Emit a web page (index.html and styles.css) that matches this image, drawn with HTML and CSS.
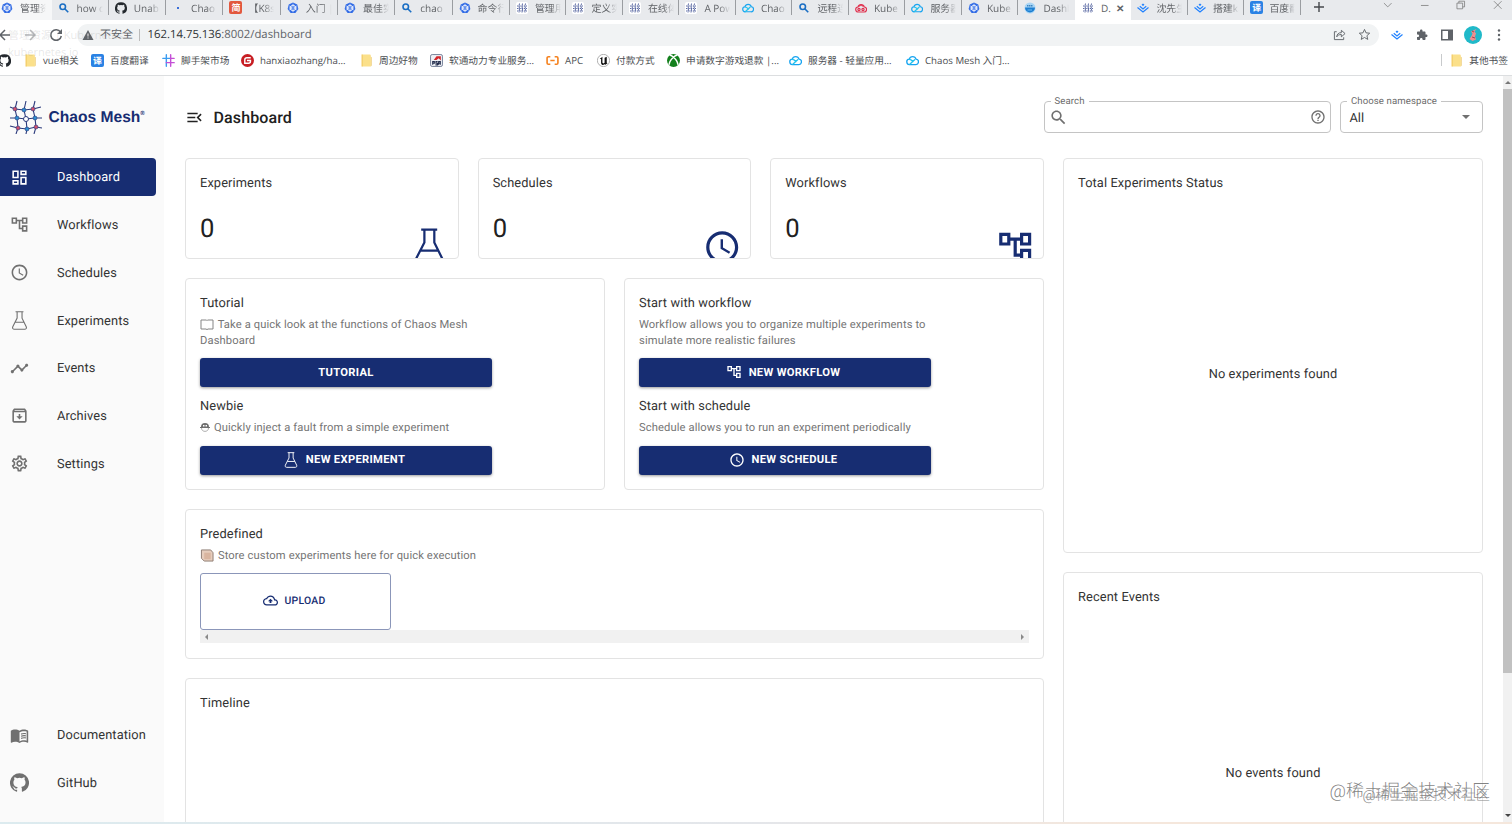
FILE: index.html
```
<!DOCTYPE html>
<html lang="zh-CN">
<head>
    <meta charset="UTF-8">
    <meta name="viewport" content="width=device-width, initial-scale=1.0">
    <title>Dashboard | Chaos Mesh</title>
    <link rel="stylesheet" href="styles.css">
</head>
<body>
    <!-- icons -->
    <svg class="sprite" xmlns="http://www.w3.org/2000/svg">
        <symbol id="i-k8s" viewBox="0 0 24 24"><path fill="#326ce5" d="M12 1l8.500 4 2.200 9.200-6 7.800H7.300l-6-7.800L3.500 5z"/><circle cx="12" cy="12" r="5.500" fill="none" stroke="#fff" stroke-width="1.600"/><path stroke="#fff" stroke-width="1.400" d="M12 3.500v17M4.500 8l15 8M19.500 8l-15 8M3.800 12h16.400"/><circle cx="12" cy="12" r="1.800" fill="#326ce5"/></symbol>
        <symbol id="i-search" viewBox="0 0 24 24"><path fill="currentColor" d="M15.500 14h-.79l-.28-.27C15.410 12.590 16 11.110 16 9.500 16 5.910 13.090 3 9.500 3S3 5.910 3 9.500 5.910 16 9.500 16c1.610 0 3.090-.59 4.230-1.570l.27.28v.79l5 4.990L20.490 19l-4.990-5zm-6 0C7.010 14 5 11.990 5 9.500S7.010 5 9.500 5 14 7.010 14 9.500 11.990 14 9.500 14z"/></symbol>
        <symbol id="i-find" viewBox="0 0 24 24"><g fill="none" stroke="#1b6fc4" stroke-width="3.200"><circle cx="9.500" cy="9.500" r="5.500"/><path d="M13.500 13.500l7 7"/></g></symbol>
        <symbol id="i-github" viewBox="0 0 24 24"><path fill="currentColor" d="M12 .3a12 12 0 0 0-3.800 23.400c.6.1.8-.3.8-.6v-2c-3.300.7-4-1.600-4-1.600-.6-1.400-1.400-1.800-1.400-1.800-1-.7.1-.7.1-.7 1.200 0 1.900 1.200 1.900 1.200 1 1.800 2.800 1.300 3.500 1 0-.8.4-1.300.7-1.600-2.700-.3-5.500-1.300-5.500-6 0-1.200.5-2.300 1.300-3.100-.2-.4-.6-1.600 0-3.200 0 0 1-.3 3.400 1.200a11.500 11.500 0 0 1 6 0c2.300-1.500 3.300-1.200 3.300-1.200.6 1.600.2 2.800 0 3.200.9.8 1.300 1.900 1.300 3.200 0 4.600-2.800 5.600-5.500 5.900.5.4.9 1 .9 2.200v3.300c0 .3.1.7.8.6A12 12 0 0 0 12 .3"/></symbol>
        <symbol id="i-mesh" viewBox="0 0 24 24"><rect width="24" height="24" rx="4" fill="#fff"/><g fill="none" stroke="#4a5a9a" stroke-width="1.800"><path stroke-dasharray="4 1.500" d="M7 3l-1 5 1 5-1 8M13 3l-1 6 1 5-1 7M19 3l-1 5 1 6-1 7"/><path stroke-dasharray="3 1.500" d="M2 8h20M2 13h20M2 18h20"/></g></symbol>
        <symbol id="i-cloud" viewBox="0 0 24 24"><g fill="none" stroke-width="2.400" stroke-linecap="round"><path stroke="#18a4f0" d="M7 19.500a5 5 0 0 1-1-10 6.500 6.500 0 0 1 12.500 0 5 5 0 0 1-1 10z"/><path stroke="#22c3ee" d="M7 19l9-8.500M6 10c3 0 5 2 7 4"/></g></symbol>
        <symbol id="i-redcloud" viewBox="0 0 24 24"><g fill="none" stroke="#e0304e" stroke-width="2.400"><path d="M7 20a5 5 0 0 1-1-10 6.500 6.500 0 0 1 12.500 0 5 5 0 0 1-1 10z"/><circle cx="8" cy="15" r="2.200"/><circle cx="16" cy="15" r="2.200"/><path d="M9 9a3 3 0 0 1 6 0"/></g></symbol>
        <symbol id="i-whale" viewBox="0 0 24 24"><circle cx="12" cy="12" r="11" fill="#a9d5f5"/><path fill="#1d7fd1" d="M2 11h20a10 10 0 0 1-20 0z"/><path fill="#3d85c0" d="M6 6h3v3H6zm4 0h3v3h-3zm4 0h3v3h-3z"/><path fill="#6fb8ee" d="M7 15h9v2H7z"/></symbol>
        <symbol id="i-juejin" viewBox="0 0 24 24"><g fill="none" stroke="#1e80ff" stroke-width="2.300"><path d="M1 11l11 9 11-9M5.500 8.500L12 13.800l6.500-5.300"/></g><path fill="#1e80ff" d="M12 3l3 2.300L12 8 9 5.300z"/></symbol>
        <symbol id="i-folder" viewBox="0 0 24 24"><path fill="#fbe08a" d="M3 1h15a2 2 0 0 1 2 2v20H3z"/><path fill="#e9bd4c" d="M20 5l2 1v15l-2 2zM3 1h2v22H3z" opacity=".6"/></symbol>
        <symbol id="i-hash" viewBox="0 0 24 24"><g fill="none" stroke-width="2.600" stroke-linecap="round"><path stroke="#3a9cf0" d="M8 1.500v21M1.500 8h14"/><path stroke="#c44fd6" d="M16 1.500v21M8 16h14.500M17 8h5.500"/></g></symbol>
        <symbol id="i-gitee" viewBox="0 0 24 24"><circle cx="12" cy="12" r="12" fill="#c71d23"/><path fill="none" stroke="#fff" stroke-width="2.600" d="M18 7h-7a4 4 0 0 0-4 4v6h7a3.500 3.500 0 0 0 3.500-3.500V12H11"/></symbol>
        <symbol id="i-psa" viewBox="0 0 24 24"><rect x="1" y="1" width="22" height="22" rx="3" fill="#eef0f5" stroke="#5f6b88" stroke-width="1.500"/><path fill="#d4262b" d="M7 11l5-7 8 0v8l-4-4-4 3z"/><path fill="none" stroke="#222c4c" stroke-width="2" d="M5 20v-6h3v3H5M14 14h-3v3h3v3h-4M16 20v-6h3v6M16 17h3"/></symbol>
        <symbol id="i-apc" viewBox="0 0 24 24"><path fill="none" stroke="#f5821f" stroke-width="3" d="M8 5H4.500A2.500 2.500 0 0 0 2 7.500v9A2.500 2.500 0 0 0 4.500 19H8M16 5h3.500A2.500 2.500 0 0 1 22 7.500v9a2.500 2.500 0 0 1-2.500 2.500H16M8 12h8"/></symbol>
        <symbol id="i-unreal" viewBox="0 0 24 24"><circle cx="12" cy="12" r="11.300" fill="#fff" stroke="#888" stroke-width="1.200"/><path fill="#111" d="M5 9l5-4v11l2 1.500 2-1.500V7l4-2v11l1.500 1-4 3-2-1-2 1.500c-2 0-4-2-4-4V9z"/></symbol>
        <symbol id="i-xbox" viewBox="0 0 24 24"><circle cx="12" cy="12" r="12" fill="#13801c"/><path fill="none" stroke="#fff" stroke-width="2.800" d="M5 2.500c3-.5 5 1.500 7 3.500 2-2 4-4 7-3.500M12 6c-4 3.500-8 8-8 14M12 6c4 3.500 8 8 8 14"/></symbol>
        <symbol id="i-dashboard" viewBox="0 0 24 24"><path fill="currentColor" d="M19 5v2h-4V5h4M9 5v6H5V5h4m10 8v6h-4v-6h4M9 17v2H5v-2h4M21 3h-8v6h8V3zM11 3H3v10h8V3zm10 8h-8v10h8V11zm-10 4H3v6h8v-6z"/></symbol>
        <symbol id="i-tree" viewBox="0 0 24 24"><path fill="currentColor" d="M22 11V3h-7v3H9V3H2v8h7V8h2v10h4v3h7v-8h-7v3h-2V8h2v3h7zM7 9H4V5h3v4zm10 6h3v4h-3v-4zm0-10h3v4h-3V5z"/></symbol>
        <symbol id="i-clock" viewBox="0 0 24 24"><path fill="currentColor" d="M11.990 2C6.470 2 2 6.480 2 12s4.470 10 9.990 10C17.520 22 22 17.520 22 12S17.520 2 11.990 2zM12 20c-4.420 0-8-3.580-8-8s3.580-8 8-8 8 3.580 8 8-3.580 8-8 8zm.5-13H11v6l5.250 3.150.75-1.230-4.500-2.670z"/></symbol>
        <symbol id="i-flask" viewBox="0 0 24 24"><path fill="none" stroke="currentColor" stroke-width="1.400" d="M7 1h10M9 1v8L3.500 19.800c-.8 1.700.2 3.200 2 3.200h13c1.800 0 2.800-1.500 2-3.200L15.200 9V1M6.500 14.200h11.200"/></symbol>
        <symbol id="i-events" viewBox="0 0 24 24"><path fill="currentColor" d="M23 8c0 1.100-.9 2-2 2-.18 0-.35-.02-.51-.07l-3.560 3.550c.05.16.07.34.07.52 0 1.100-.9 2-2 2s-2-.9-2-2c0-.18.02-.36.07-.52l-2.550-2.550c-.16.05-.34.07-.52.07s-.36-.02-.52-.07l-4.550 4.560c.05.16.07.33.07.51 0 1.100-.9 2-2 2s-2-.9-2-2 .9-2 2-2c.18 0 .35.02.51.07l4.560-4.550C8.020 9.360 8 9.180 8 9c0-1.100.9-2 2-2s2 .9 2 2c0 .18-.02.36-.07.52l2.550 2.550c.16-.05.34-.07.52-.07s.36.02.52.07l3.550-3.560C19.020 8.350 19 8.180 19 8c0-1.100.9-2 2-2s2 .9 2 2z"/></symbol>
        <symbol id="i-archive" viewBox="0 0 24 24"><path fill="currentColor" d="M20.540 5.230l-1.390-1.680C18.880 3.210 18.470 3 18 3H6c-.47 0-.88.21-1.160.55L3.460 5.230C3.170 5.570 3 6.020 3 6.500V19c0 1.100.9 2 2 2h14c1.100 0 2-.9 2-2V6.500c0-.48-.17-.93-.46-1.270zM6.240 5h11.520l.83 1H5.420l.82-1zM5 19V8h14v11H5zm8-9h-2v3H8l4 4 4-4h-3z"/></symbol>
        <symbol id="i-settings" viewBox="0 0 24 24"><path fill="currentColor" d="M19.430 12.980c.04-.32.07-.64.07-.98s-.03-.66-.07-.98l2.110-1.650c.19-.15.24-.42.12-.64l-2-3.460c-.09-.16-.26-.25-.44-.25-.06 0-.12.01-.17.03l-2.490 1c-.52-.4-1.080-.73-1.690-.98l-.38-2.650C14.460 2.180 14.250 2 14 2h-4c-.25 0-.46.18-.49.42l-.38 2.650c-.61.25-1.170.59-1.690.98l-2.490-1c-.06-.02-.12-.03-.18-.03-.17 0-.34.09-.43.25l-2 3.460c-.13.22-.07.49.12.64l2.110 1.650c-.04.32-.07.65-.07.98s.03.66.07.98l-2.110 1.650c-.19.15-.24.42-.12.64l2 3.460c.09.16.26.25.44.25.06 0 .12-.01.17-.03l2.490-1c.52.4 1.080.73 1.690.98l.38 2.650c.03.24.24.42.49.42h4c.25 0 .46-.18.49-.42l.38-2.650c.61-.25 1.170-.59 1.690-.98l2.490 1c.06.02.12.03.18.03.17 0 .34-.09.43-.25l2-3.460c.12-.22.07-.49-.12-.64l-2.110-1.650zm-1.980-1.710c.04.31.05.52.05.73 0 .21-.02.43-.05.73l-.14 1.130.89.7 1.080.84-.7 1.210-1.270-.51-1.040-.42-.9.68c-.43.32-.84.56-1.250.73l-1.060.43-.16 1.130-.2 1.350h-1.400l-.19-1.350-.16-1.130-1.060-.43c-.43-.18-.83-.41-1.230-.71l-.91-.7-1.060.43-1.270.51-.7-1.210 1.080-.84.89-.7-.14-1.130c-.03-.31-.05-.54-.05-.74s.02-.43.05-.73l.14-1.130-.89-.7-1.080-.84.7-1.210 1.270.51 1.040.42.9-.68c.43-.32.84-.56 1.250-.73l1.060-.43.16-1.130.2-1.350h1.390l.19 1.350.16 1.130 1.060.43c.43.18.83.41 1.230.71l.91.7 1.060-.43 1.270-.51.7 1.210-1.070.85-.89.7.14 1.130zM12 8c-2.210 0-4 1.790-4 4s1.790 4 4 4 4-1.790 4-4-1.790-4-4-4zm0 6c-1.100 0-2-.9-2-2s.9-2 2-2 2 .9 2 2-.9 2-2 2z"/></symbol>
        <symbol id="i-book" viewBox="0 0 24 24"><path fill="currentColor" d="M21 5c-1.110-.35-2.330-.5-3.500-.5-1.950 0-4.050.4-5.500 1.500-1.450-1.100-3.550-1.500-5.500-1.500S2.450 4.900 1 6v14.650c0 .25.25.5.5.5.1 0 .15-.05.25-.05C3.100 20.450 5.050 20 6.500 20c1.950 0 4.050.4 5.500 1.500 1.350-.85 3.800-1.500 5.500-1.500 1.650 0 3.350.3 4.750 1.050.1.05.15.05.25.05.25 0 .5-.25.5-.5V6c-.6-.45-1.250-.75-2-1zm0 13.500c-1.100-.35-2.300-.5-3.500-.5-1.700 0-4.150.65-5.500 1.500V8c1.350-.85 3.800-1.500 5.500-1.500 1.200 0 2.400.15 3.500.5v11.500z"/><path fill="none" stroke="currentColor" stroke-width="1.500" d="M14 10.200c2-.8 4-.9 6-.5M14 12.900c2-.8 4-.9 6-.5M14 15.600c2-.8 4-.9 6-.5"/></symbol>
        <symbol id="i-menu" viewBox="0 0 24 24"><path fill="currentColor" d="M3 18h13v-2H3v2zm0-5h10v-2H3v2zm0-7v2h13V6H3zm18 9.590L17.420 12 21 8.410 19.590 7l-5 5 5 5L21 15.590z"/></symbol>
        <symbol id="i-help" viewBox="0 0 24 24"><path fill="currentColor" d="M11 18h2v-2h-2v2zm1-16C6.480 2 2 6.480 2 12s4.480 10 10 10 10-4.480 10-10S17.520 2 12 2zm0 18c-4.410 0-8-3.590-8-8s3.590-8 8-8 8 3.590 8 8-3.590 8-8 8zm0-14c-2.210 0-4 1.790-4 4h2c0-1.100.9-2 2-2s2 .9 2 2c0 2-3 1.750-3 5h2c0-2.250 3-2.500 3-5 0-2.210-1.790-4-4-4z"/></symbol>
        <symbol id="i-upload" viewBox="0 0 24 24"><path fill="currentColor" d="M19.350 10.040C18.670 6.590 15.640 4 12 4 9.110 4 6.600 5.640 5.350 8.040 2.340 8.360 0 10.910 0 14c0 3.310 2.690 6 6 6h13c2.760 0 5-2.240 5-5 0-2.640-2.050-4.780-4.650-4.960zM19 18H6c-2.210 0-4-1.790-4-4 0-2.050 1.530-3.760 3.560-3.970l1.070-.11.5-.95C8.080 7.140 9.940 6 12 6c2.620 0 4.880 1.860 5.390 4.430l.3 1.500 1.530.11c1.560.1 2.780 1.410 2.780 2.960 0 1.650-1.350 3-3 3zM8 13h2.550v3h2.900v-3H16l-4-4z"/></symbol>
        <symbol id="i-puzzle" viewBox="0 0 24 24"><path fill="currentColor" d="M20.500 11H19V7c0-1.100-.9-2-2-2h-4V3.500C13 2.120 11.880 1 10.500 1S8 2.120 8 3.500V5H4c-1.100 0-1.990.9-1.990 2v3.800H3.500c1.490 0 2.700 1.210 2.700 2.700s-1.210 2.700-2.700 2.700H2V20c0 1.100.9 2 2 2h3.800v-1.500c0-1.490 1.210-2.700 2.700-2.700 1.490 0 2.700 1.210 2.700 2.700V22H17c1.100 0 2-.9 2-2v-4h1.500c1.380 0 2.500-1.120 2.500-2.500S21.880 11 20.500 11z"/></symbol>
    </svg>

    <!-- browser chrome -->
    <div class="tabs">
        <div class="tab hover"><svg><use href="#i-k8s"/></svg><span>管理资源</span></div>
        <div class="tab wide"><svg><use href="#i-find"/></svg><span>how cha</span></div>
        <div class="tab wide"><svg class="dark"><use href="#i-github"/></svg><span>Unable</span></div>
        <div class="tab wide loading"><i class="dot"></i><span>Chao</span></div>
        <div class="tab wide"><b class="badge red">简</b><span>【K8s】</span></div>
        <div class="tab wide"><svg><use href="#i-k8s"/></svg><span>入门 | K</span></div>
        <div class="tab wide"><svg><use href="#i-k8s"/></svg><span>最佳实践</span></div>
        <div class="tab wide"><svg><use href="#i-find"/></svg><span>chao</span></div>
        <div class="tab wide"><svg><use href="#i-k8s"/></svg><span>命令行</span></div>
        <div class="tab"><svg><use href="#i-mesh"/></svg><span>管理用户</span></div>
        <div class="tab"><svg><use href="#i-mesh"/></svg><span>定义实验</span></div>
        <div class="tab"><svg><use href="#i-mesh"/></svg><span>在线体验</span></div>
        <div class="tab"><svg><use href="#i-mesh"/></svg><span>A Power</span></div>
        <div class="tab"><svg><use href="#i-cloud"/></svg><span>Chao</span></div>
        <div class="tab"><svg><use href="#i-find"/></svg><span>远程连接</span></div>
        <div class="tab"><svg><use href="#i-redcloud"/></svg><span>Kube</span></div>
        <div class="tab"><svg><use href="#i-cloud"/></svg><span>服务器</span></div>
        <div class="tab"><svg><use href="#i-k8s"/></svg><span>Kube</span></div>
        <div class="tab last"><svg><use href="#i-whale"/></svg><span>Dashb</span></div>
        <div class="tab active"><svg><use href="#i-mesh"/></svg><span>D.</span><em>✕</em></div>
        <div class="tab"><svg><use href="#i-juejin"/></svg><span>沈先生</span></div>
        <div class="tab"><svg><use href="#i-juejin"/></svg><span>搭建k8</span></div>
        <div class="tab"><b class="badge blue">译</b><span>百度翻译</span></div>
        <svg class="plus" viewBox="0 0 12 12"><path d="M6 1v10M1 6h10"/></svg>
        <div class="win-buttons">
            <svg viewBox="0 0 10 10"><path d="M1 3l4 4 4-4"/></svg>
            <svg viewBox="0 0 10 10"><path d="M1 5.500h8"/></svg>
            <svg viewBox="0 0 10 10"><path d="M1 3h6v6H1zM3 3V1h6v6H7"/></svg>
            <svg viewBox="0 0 10 10"><path d="M1 1l8 8M9 1l-8 8"/></svg>
        </div>
    </div>
    <div class="toolbar">
        <svg class="nav-arrow" viewBox="0 0 14 14"><path d="M12 7H2M7 2L2 7l5 5"/></svg>
        <svg class="nav-arrow dim" viewBox="0 0 14 14"><path d="M2 7h10M7 2l5 5-5 5"/></svg>
        <svg class="nav-arrow reload" viewBox="0 0 14 14"><path d="M11.500 4A5.300 5.300 0 1 0 12.300 8"/><path class="fill" d="M8 6h5V1z"/></svg>
        <div class="address">
            <svg class="warn" viewBox="0 0 12 12"><path fill="#5f6368" d="M6 1l5.500 10H.5z"/><path stroke="#fff" d="M6 4.500v3M6 8.500v1"/></svg>
            <span class="insecure">不安全</span>
            <span class="url">162.14.75.136<i>:8002/dashboard</i></span>
            <svg class="share" viewBox="0 0 14 14"><path d="M4 4H1.500v8.500h10V10M4 9.500c.3-3 2-4.500 5-4.500V2.500L13 6 9 9.500V7c-2.500 0-4 .8-5 2.500z"/></svg>
            <svg class="star" viewBox="0 0 14 14"><path d="M7 1.500l1.600 3.700 4 .4-3 2.700.9 4L7 10.200l-3.500 2.100.9-4-3-2.700 4-.4z"/></svg>
        </div>
        <div class="extensions">
            <svg><use href="#i-juejin"/></svg>
            <svg><use href="#i-puzzle"/></svg>
            <svg viewBox="0 0 12 12"><path fill="#5f6368" d="M0 .5h12v11H0zM1.500 2v8H7V2z" fill-rule="evenodd"/></svg>
            <svg class="avatar" viewBox="0 0 18 18"><circle cx="9" cy="9" r="9" fill="#20b9c9"/><path fill="#ef8f8f" d="M12.500 3L7 5.500l1.500 2L7.500 10l-2 3 3 2 3.500-1.500-1-3 1-3-1.500-2z"/><path stroke="#a64550" d="M8 5l2 1M8 11l3 1"/></svg>
            <svg class="more" viewBox="0 0 4 14"><circle cx="2" cy="2.500" r="1.200"/><circle cx="2" cy="7" r="1.200"/><circle cx="2" cy="11.500" r="1.200"/></svg>
        </div>
        <div class="tab-tip">管理资源 | Kubernetes<br>kubernetes.io</div>
    </div>
    <div class="bookmarks">
        <a><svg class="dark"><use href="#i-github"/></svg></a>
        <a><svg><use href="#i-folder"/></svg>vue相关</a>
        <a><b class="badge blue">译</b>百度翻译</a>
        <a><svg><use href="#i-hash"/></svg>脚手架市场</a>
        <a><svg><use href="#i-gitee"/></svg>hanxiaozhang/ha...</a>
        <a><svg><use href="#i-folder"/></svg>周边好物</a>
        <a><svg><use href="#i-psa"/></svg>软通动力专业服务...</a>
        <a><svg><use href="#i-apc"/></svg>APC</a>
        <a><svg><use href="#i-unreal"/></svg>付款方式</a>
        <a><svg><use href="#i-xbox"/></svg>申请数字游戏退款 |...</a>
        <a><svg><use href="#i-cloud"/></svg>服务器 - 轻量应用...</a>
        <a><svg><use href="#i-cloud"/></svg>Chaos Mesh 入门...</a>
        <a class="other"><svg><use href="#i-folder"/></svg>其他书签</a>
    </div>

    <div class="app">
        <nav class="sidebar">
            <div class="logo">
                <svg viewBox="0 0 34 34">
                    <g fill="none" stroke="#2b3a7c" stroke-width="1.100">
                        <path d="M1 7l5 2 9 1 9-1 8-2M1 18l7 0 9 1 9-1 7 0M1 26l8 2 9 1 9-2 6 1"/>
                        <path d="M8 1L6 9l2 9 1 10-2 6M17 1l-2 9 2 9 1 10-1 5M26 1l-2 8 2 9 1 9-2 7"/>
                    </g>
                    <g fill="#d0506f" stroke="#2b3a7c" stroke-width=".6"><circle cx="6" cy="9" r="2"/><circle cx="24" cy="9" r="2"/><circle cx="9" cy="28" r="2"/><circle cx="27" cy="27" r="2"/></g>
                    <g fill="#2f8fd0" stroke="#2b3a7c" stroke-width=".6"><circle cx="15" cy="10" r="2"/><circle cx="8" cy="18" r="2"/><circle cx="26" cy="18" r="2"/><circle cx="18" cy="29" r="2"/></g>
                    <circle cx="17" cy="19" r="2.500" fill="#fff" stroke="#2b3a7c"/>
                </svg>
                <span>Chaos Mesh<sup>®</sup></span>
            </div>
            <a class="nav-item active"><svg><use href="#i-dashboard"/></svg>Dashboard</a>
            <a class="nav-item"><svg><use href="#i-tree"/></svg>Workflows</a>
            <a class="nav-item"><svg><use href="#i-clock"/></svg>Schedules</a>
            <a class="nav-item"><svg><use href="#i-flask"/></svg>Experiments</a>
            <a class="nav-item"><svg><use href="#i-events"/></svg>Events</a>
            <a class="nav-item"><svg><use href="#i-archive"/></svg>Archives</a>
            <a class="nav-item"><svg><use href="#i-settings"/></svg>Settings</a>
            <a class="nav-item bottom"><svg><use href="#i-book"/></svg>Documentation</a>
            <a class="nav-item"><svg><use href="#i-github"/></svg>GitHub</a>
        </nav>

        <main class="main">
            <header class="header">
                <svg class="menu"><use href="#i-menu"/></svg>
                <h1>Dashboard</h1>
                <div class="field search">
                    <label>Search</label>
                    <svg><use href="#i-search"/></svg>
                    <svg class="help"><use href="#i-help"/></svg>
                </div>
                <div class="field namespace">
                    <label>Choose namespace</label>
                    <span>All</span>
                    <i class="caret"></i>
                </div>
            </header>

            <div class="content">
                <div class="left">
                    <div class="stats">
                        <div class="card stat"><h2>Experiments</h2><strong>0</strong><svg><use href="#i-flask"/></svg></div>
                        <div class="card stat"><h2>Schedules</h2><strong>0</strong><svg><use href="#i-clock"/></svg></div>
                        <div class="card stat"><h2>Workflows</h2><strong>0</strong><svg><use href="#i-tree"/></svg></div>
                    </div>
                    <div class="guides">
                        <div class="card guide">
                            <h2>Tutorial</h2>
                            <p><svg class="emoji wide" viewBox="0 0 14 13"><path fill="none" stroke="#858585" d="M1 2h5.500l.5.500.500-.500H13v9H8l-1 .6L6 11H1z"/></svg> Take a quick look at the functions of Chaos Mesh Dashboard</p>
                            <button>TUTORIAL</button>
                            <h2>Newbie</h2>
                            <p><svg class="emoji" viewBox="0 0 10 10"><path fill="#707070" d="M1 5a4 4 0 0 1 8 0h1v1H0V5z"/><path fill="#fff" d="M3 3h1.500v1.500H3zM5.500 3H7v1.500H5.500z"/><path fill="none" stroke="#999" stroke-width=".8" d="M1.500 6c0 4.500 7 4.500 7 0"/></svg> Quickly inject a fault from a simple experiment</p>
                            <button><svg><use href="#i-flask"/></svg>NEW EXPERIMENT</button>
                        </div>
                        <div class="card guide">
                            <h2>Start with workflow</h2>
                            <p>Workflow allows you to organize multiple experiments to simulate more realistic failures</p>
                            <button><svg><use href="#i-tree"/></svg>NEW WORKFLOW</button>
                            <h2>Start with schedule</h2>
                            <p>Schedule allows you to run an experiment periodically</p>
                            <button><svg><use href="#i-clock"/></svg>NEW SCHEDULE</button>
                        </div>
                    </div>
                    <div class="card predefined">
                        <h2>Predefined</h2>
                        <p><svg class="emoji wide" viewBox="0 0 14 14"><path fill="#e6cdbd" stroke="#8b7a70" d="M1 1h10l2.500 3v9H4L1 10z"/><path fill="#d9b5a0" d="M4 4h7v7H4z"/></svg> Store custom experiments here for quick execution</p>
                        <div class="upload"><svg><use href="#i-upload"/></svg>UPLOAD</div>
                        <div class="hscroll"><i></i><i></i></div>
                    </div>
                    <div class="card timeline"><h2>Timeline</h2></div>
                </div>
                <div class="right">
                    <div class="card status"><h2>Total Experiments Status</h2><div class="empty">No experiments found</div></div>
                    <div class="card events"><h2>Recent Events</h2><div class="empty">No events found</div></div>
                </div>
            </div>
        </main>

        <div class="scrollbar"><i class="up"></i><div class="thumb"></div><i class="down"></i></div>
    </div>
    <div class="desktop-edge"></div>

    <div class="watermark">@稀土掘金技术社区</div>
    <div class="watermark small">@稀土掘金技术社区</div>
</body>
</html>
```
FILE: styles.css
```
* {
    margin: 0;
    padding: 0;
    box-sizing: border-box;
}

body {
    width: 1512px;
    height: 824px;
    overflow: hidden;
    position: relative;
    display: flex;
    flex-direction: column;
    font-family: Roboto, "Noto Sans CJK SC", sans-serif;
    text-rendering: geometricPrecision;
    background: #fff;
    color: #333;
}

svg {
    flex-shrink: 0;
}

i, em {
    font-style: normal;
}

.sprite {
    display: none;
}

.dark {
    color: #24292e;
}

/* tabs */
.tabs, .toolbar, .bookmarks {
    font-family: "Open Sans", "Noto Sans CJK SC", sans-serif;
}

.tabs {
    height: 20px;
    flex-shrink: 0;
    display: flex;
    background: #e8eaed;
    padding-bottom: 5px;
    margin-left: -5px;
}

.tab {
    width: 56.500px;
    flex-shrink: 0;
    display: flex;
    align-items: center;
    padding-left: 6px;
    border-right: 1px solid #9a9da1;
    font-size: 10px;
    color: #606367;
    white-space: nowrap;
    overflow: hidden;
}

.tab.wide {
    width: 57.300px;
}

.tab svg {
    width: 12px;
    height: 12px;
}

.tab span {
    width: 26px;
    margin-left: 7px;
    line-height: 14px;
    overflow: hidden;
    -webkit-mask-image: linear-gradient(90deg, #000 60%, transparent);
    mask-image: linear-gradient(90deg, #000 60%, transparent);
}

.tab.hover {
    background: #f6f7f8;
    border-color: transparent;
    height: 20px;
    padding-bottom: 5px;
}

.tab.last {
    border-color: transparent;
}

.tab.active {
    height: 20px;
    padding-bottom: 5px;
    padding-left: 7px;
    background: #fff;
    border-color: transparent;
}

.tab.active span {
    width: 12px;
    -webkit-mask-image: none;
    mask-image: none;
}

.tab.active em {
    margin-left: 3px;
    font-size: 10px;
    font-weight: bold;
}

.dot {
    width: 2px;
    height: 2px;
    margin: 0 5px;
    background: #3b6fd8;
}

.badge {
    width: 13px;
    height: 13px;
    flex-shrink: 0;
    border-radius: 2px;
    color: #fff;
    font-size: 9px;
    line-height: 13px;
    text-align: center;
}

.badge.red {
    background: #e2583e;
}

.badge.blue {
    background: #2a82e4;
}

.tab .badge + span {
    margin-left: 6px;
}

.plus {
    width: 12px;
    height: 12px;
    margin: 1px 0 0 12px;
    stroke: #45484c;
    stroke-width: 1.4;
}

.win-buttons {
    display: flex;
    gap: 27px;
    margin: 0 10px 0 auto;
}

.win-buttons svg {
    width: 9.500px;
    height: 10px;
    fill: none;
    stroke: #777;
    stroke-width: 0.8;
}

/* address row */
.toolbar {
    height: 29px;
    flex-shrink: 0;
    position: relative;
    display: flex;
    align-items: center;
}

.nav-arrow {
    width: 14px;
    height: 14px;
    margin-left: -2px;
    fill: none;
    stroke: #5f6368;
    stroke-width: 1.5;
}

.nav-arrow.dim {
    margin-left: 11px;
    stroke: #b5b7ba;
}

.nav-arrow.reload {
    margin-left: 12px;
}

.nav-arrow .fill {
    fill: #5f6368;
    stroke: none;
}

.address {
    width: 1302px;
    height: 22px;
    margin-left: 14px;
    padding: 0 8px 0 5px;
    display: flex;
    align-items: center;
    border-radius: 11px;
    background: #f1f3f4;
    font-size: 11.350px;
    color: #5f6368;
}

.address svg {
    width: 13px;
    height: 13px;
    fill: none;
    stroke: #5f6368;
}

.address .warn {
    width: 12px;
    height: 12px;
    stroke: none;
}

.insecure {
    margin-left: 6px;
    padding-right: 6px;
    font-size: 11px;
    line-height: 12px;
    border-right: 1px solid #bbb;
}

.url {
    margin-left: 7.500px;
    color: #303336;
}

.url i {
    color: #5f6368;
}

.address .share {
    margin-left: auto;
}

.address .star {
    margin-left: 12px;
}

.extensions {
    margin: 0 11px 0 auto;
    display: flex;
    align-items: center;
    gap: 13px;
    color: #5f6368;
}

.extensions svg {
    width: 12px;
    height: 12px;
}

.extensions .avatar {
    width: 18px;
    height: 18px;
    margin-left: -2px;
}

.extensions .more {
    width: 4px;
    height: 14px;
    margin-left: 2px;
    fill: #5f6368;
}

.tab-tip {
    position: absolute;
    left: 8px;
    top: 7px;
    font-size: 11px;
    line-height: 17px;
    color: rgba(120, 120, 120, 0.18);
}

/* bookmarks */
.bookmarks {
    height: 27px;
    flex-shrink: 0;
    display: grid;
    grid-template-columns: 26px 67px 71px 79px 119px 70px 116px 51px 70px 122px 117px 140px 1fr;
    padding: 0 0 4px 0;
    margin-left: -2px;
    border-bottom: 1px solid #dcdee0;
    font-size: 9.700px;
    color: #4b4e52;
    white-space: nowrap;
}

.bookmarks a {
    display: flex;
    align-items: center;
    gap: 6px;
}

.bookmarks svg {
    width: 13px;
    height: 13px;
}

.bookmarks .other {
    justify-self: end;
    align-self: center;
    height: 12px;
    margin-right: 4px;
    padding-left: 8px;
    border-left: 1px solid #c8cacc;
}

/* app */
.app {
    height: 746px;
    flex-shrink: 0;
    display: flex;
    overflow: hidden;
}

.sidebar {
    width: 164px;
    flex-shrink: 0;
    display: flex;
    flex-direction: column;
    background: #fafafa;
    padding-bottom: 20px;
}

.logo {
    height: 82px;
    display: flex;
    align-items: center;
    padding-left: 8.500px;
}

.logo svg {
    width: 34px;
    height: 34px;
}

.logo span {
    margin-left: 6px;
    padding-top: 1px;
    font: bold 15.600px "Liberation Sans", Arial, sans-serif;
    color: #172d72;
}

.logo sup {
    font-size: 6px;
    vertical-align: 7px;
}

.nav-item {
    width: 156px;
    height: 38.200px;
    flex-shrink: 0;
    margin-bottom: 9.550px;
    padding: 1.500px 0 0 9.500px;
    display: flex;
    align-items: center;
    font-size: 12.800px;
    letter-spacing: 0.00938em;
    color: #333;
}

.nav-item svg {
    width: 19px;
    height: 19px;
    margin: -1.500px 28.500px 0 0;
    color: #707070;
}

.nav-item.active {
    background: #172d72;
    border-radius: 0 4px 4px 0;
    color: #fff;
}

.nav-item.active svg {
    color: #fff;
}

.nav-item.bottom {
    margin-top: auto;
}

.nav-item:last-child {
    margin-bottom: 0;
}

.main {
    width: 1339px;
    flex-shrink: 0;
    padding: 0 20px 0 21px;
}

.header {
    height: 82px;
    display: flex;
    align-items: center;
}

.menu {
    width: 19px;
    height: 19px;
    color: #222;
}

.header h1 {
    margin-left: 9.500px;
    margin-right: auto;
    font-size: 16px;
    font-weight: 500;
    letter-spacing: 0.0075em;
    color: #212121;
}

.field {
    position: relative;
    height: 32px;
    display: flex;
    align-items: center;
    border: 1px solid #c4c4c4;
    border-radius: 4px;
    font-size: 12.800px;
}

.field label {
    position: absolute;
    top: -6px;
    left: 6px;
    padding: 0 4px;
    background: #fff;
    font-size: 9.600px;
    line-height: 12px;
    letter-spacing: 0.00938em;
    color: #6b6b6b;
}

.search {
    width: 287px;
    padding: 0 4px;
}

.search svg {
    width: 19px;
    height: 19px;
    color: #707070;
}

.search .help {
    width: 16px;
    height: 16px;
    margin-left: auto;
}

.namespace {
    width: 143px;
    margin-left: 9.500px;
    padding: 0 12px 0 8.500px;
}

.namespace span {
    padding-top: 2px;
}

.caret {
    margin-left: auto;
    border: 4px solid transparent;
    border-top-color: #707070;
    border-bottom: 0;
}

.content {
    display: flex;
    gap: 19px;
}

.left {
    width: 859px;
}

.right {
    width: 420px;
}

.card {
    border: 1px solid #e3e3e3;
    border-radius: 4px;
    padding: 14px;
}

.card h2 {
    padding-top: 1px;
    margin-bottom: -1px;
    font-size: 12.800px;
    font-weight: 400;
    line-height: 20px;
    letter-spacing: 0.00938em;
    color: #333;
}

.card p {
    width: 292px;
    margin-top: 5px;
    font-size: 11.200px;
    line-height: 16px;
    letter-spacing: 0.01em;
    color: #757575;
}

/* h2 has a negative bottom margin, so the gap below it is 4px */
.card h2 + p {
    margin-top: 4px;
    padding-top: 0;
}

.emoji {
    width: 10px;
    height: 10px;
    margin-right: 1px;
    vertical-align: -1px;
}

.emoji.wide {
    width: 14px;
    height: 13px;
    vertical-align: -3px;
}

.stats {
    display: grid;
    grid-template-columns: repeat(3, 1fr);
    gap: 19px;
}

.stat {
    height: 101px;
    position: relative;
    overflow: hidden;
}

.stat strong {
    display: block;
    padding-top: 20px;
    font-size: 25.600px;
    font-weight: 400;
    line-height: 32px;
    color: #212121;
}

.stat svg {
    position: absolute;
    right: 9px;
    bottom: -8px;
    width: 38.400px;
    height: 38.400px;
    color: #172d72;
}

.guides {
    display: grid;
    grid-template-columns: 1fr 1fr;
    gap: 19px;
    margin-top: 19px;
}

.guide {
    height: 212px;
}

.guide button {
    width: 292px;
    height: 29px;
    display: flex;
    align-items: center;
    justify-content: center;
    gap: 7px;
    margin: 9.300px 0 9.200px;
    padding-bottom: 1px;
    border: 0;
    border-radius: 3px;
    background: #172d72;
    box-shadow: 0 1px 3px rgba(0, 0, 0, 0.4);
    color: #fff;
    font: 700 11.200px Roboto, sans-serif;
    letter-spacing: 0.02857em;
}

.guide button svg {
    width: 16px;
    height: 16px;
    margin-left: -4px;
}

.predefined {
    height: 150px;
    margin-top: 19px;
}

.upload {
    width: 191px;
    height: 57px;
    margin-top: 9px;
    padding: 0 2px 2px 0;
    display: flex;
    align-items: center;
    justify-content: center;
    gap: 6px;
    border: 1px solid #8b96b9;
    border-radius: 3px;
    color: #172d72;
    font-size: 10.400px;
    font-weight: 500;
    letter-spacing: 0.02857em;
}

.upload svg {
    width: 15px;
    height: 15px;
}

.predefined p {
    width: auto;
}

.hscroll {
    height: 13px;
    display: flex;
    align-items: center;
    justify-content: space-between;
    padding: 0 5px;
    background: #f1f1f1;
}

.hscroll i {
    border: 3px solid transparent;
    border-left: 0;
    border-right-color: #8a8a8a;
}

.hscroll i:last-child {
    transform: scaleX(-1);
}

.timeline {
    height: 300px;
    margin-top: 19px;
}

.status, .events {
    height: 395px;
    display: flex;
    flex-direction: column;
}

.status .empty {
    padding-top: 18px;
}

.events {
    height: 383px;
    margin-top: 19px;
}

.empty {
    flex: 1;
    display: flex;
    align-items: center;
    justify-content: center;
    font-size: 12.800px;
    letter-spacing: 0.00938em;
}

.scrollbar {
    width: 9px;
    display: flex;
    flex-direction: column;
    align-items: center;
    background: #f1f1f1;
}

.scrollbar i {
    border: 3px solid transparent;
}

.scrollbar .up {
    margin: 5px 0 5px;
    border-top: 0;
    border-bottom-color: #777;
}

.scrollbar .thumb {
    width: 9px;
    height: 584px;
    background: #c1c1c1;
}

.scrollbar .down {
    margin: auto 0 5px;
    border-bottom: 0;
    border-top-color: #444;
}

.desktop-edge {
    height: 2px;
    flex-shrink: 0;
    background: linear-gradient(90deg, #dcebef, #e4e6ea 50%, #f5e7dc 75%);
}

.watermark {
    position: absolute;
    right: 22px;
    top: 779px;
    font-size: 18px;
    line-height: 26px;
    font-weight: 300;
    color: rgba(90, 90, 90, 0.75);
    text-shadow: 0 0 2px #fff;
}

.watermark.small {
    top: 783px;
    font-size: 14.300px;
}
```
